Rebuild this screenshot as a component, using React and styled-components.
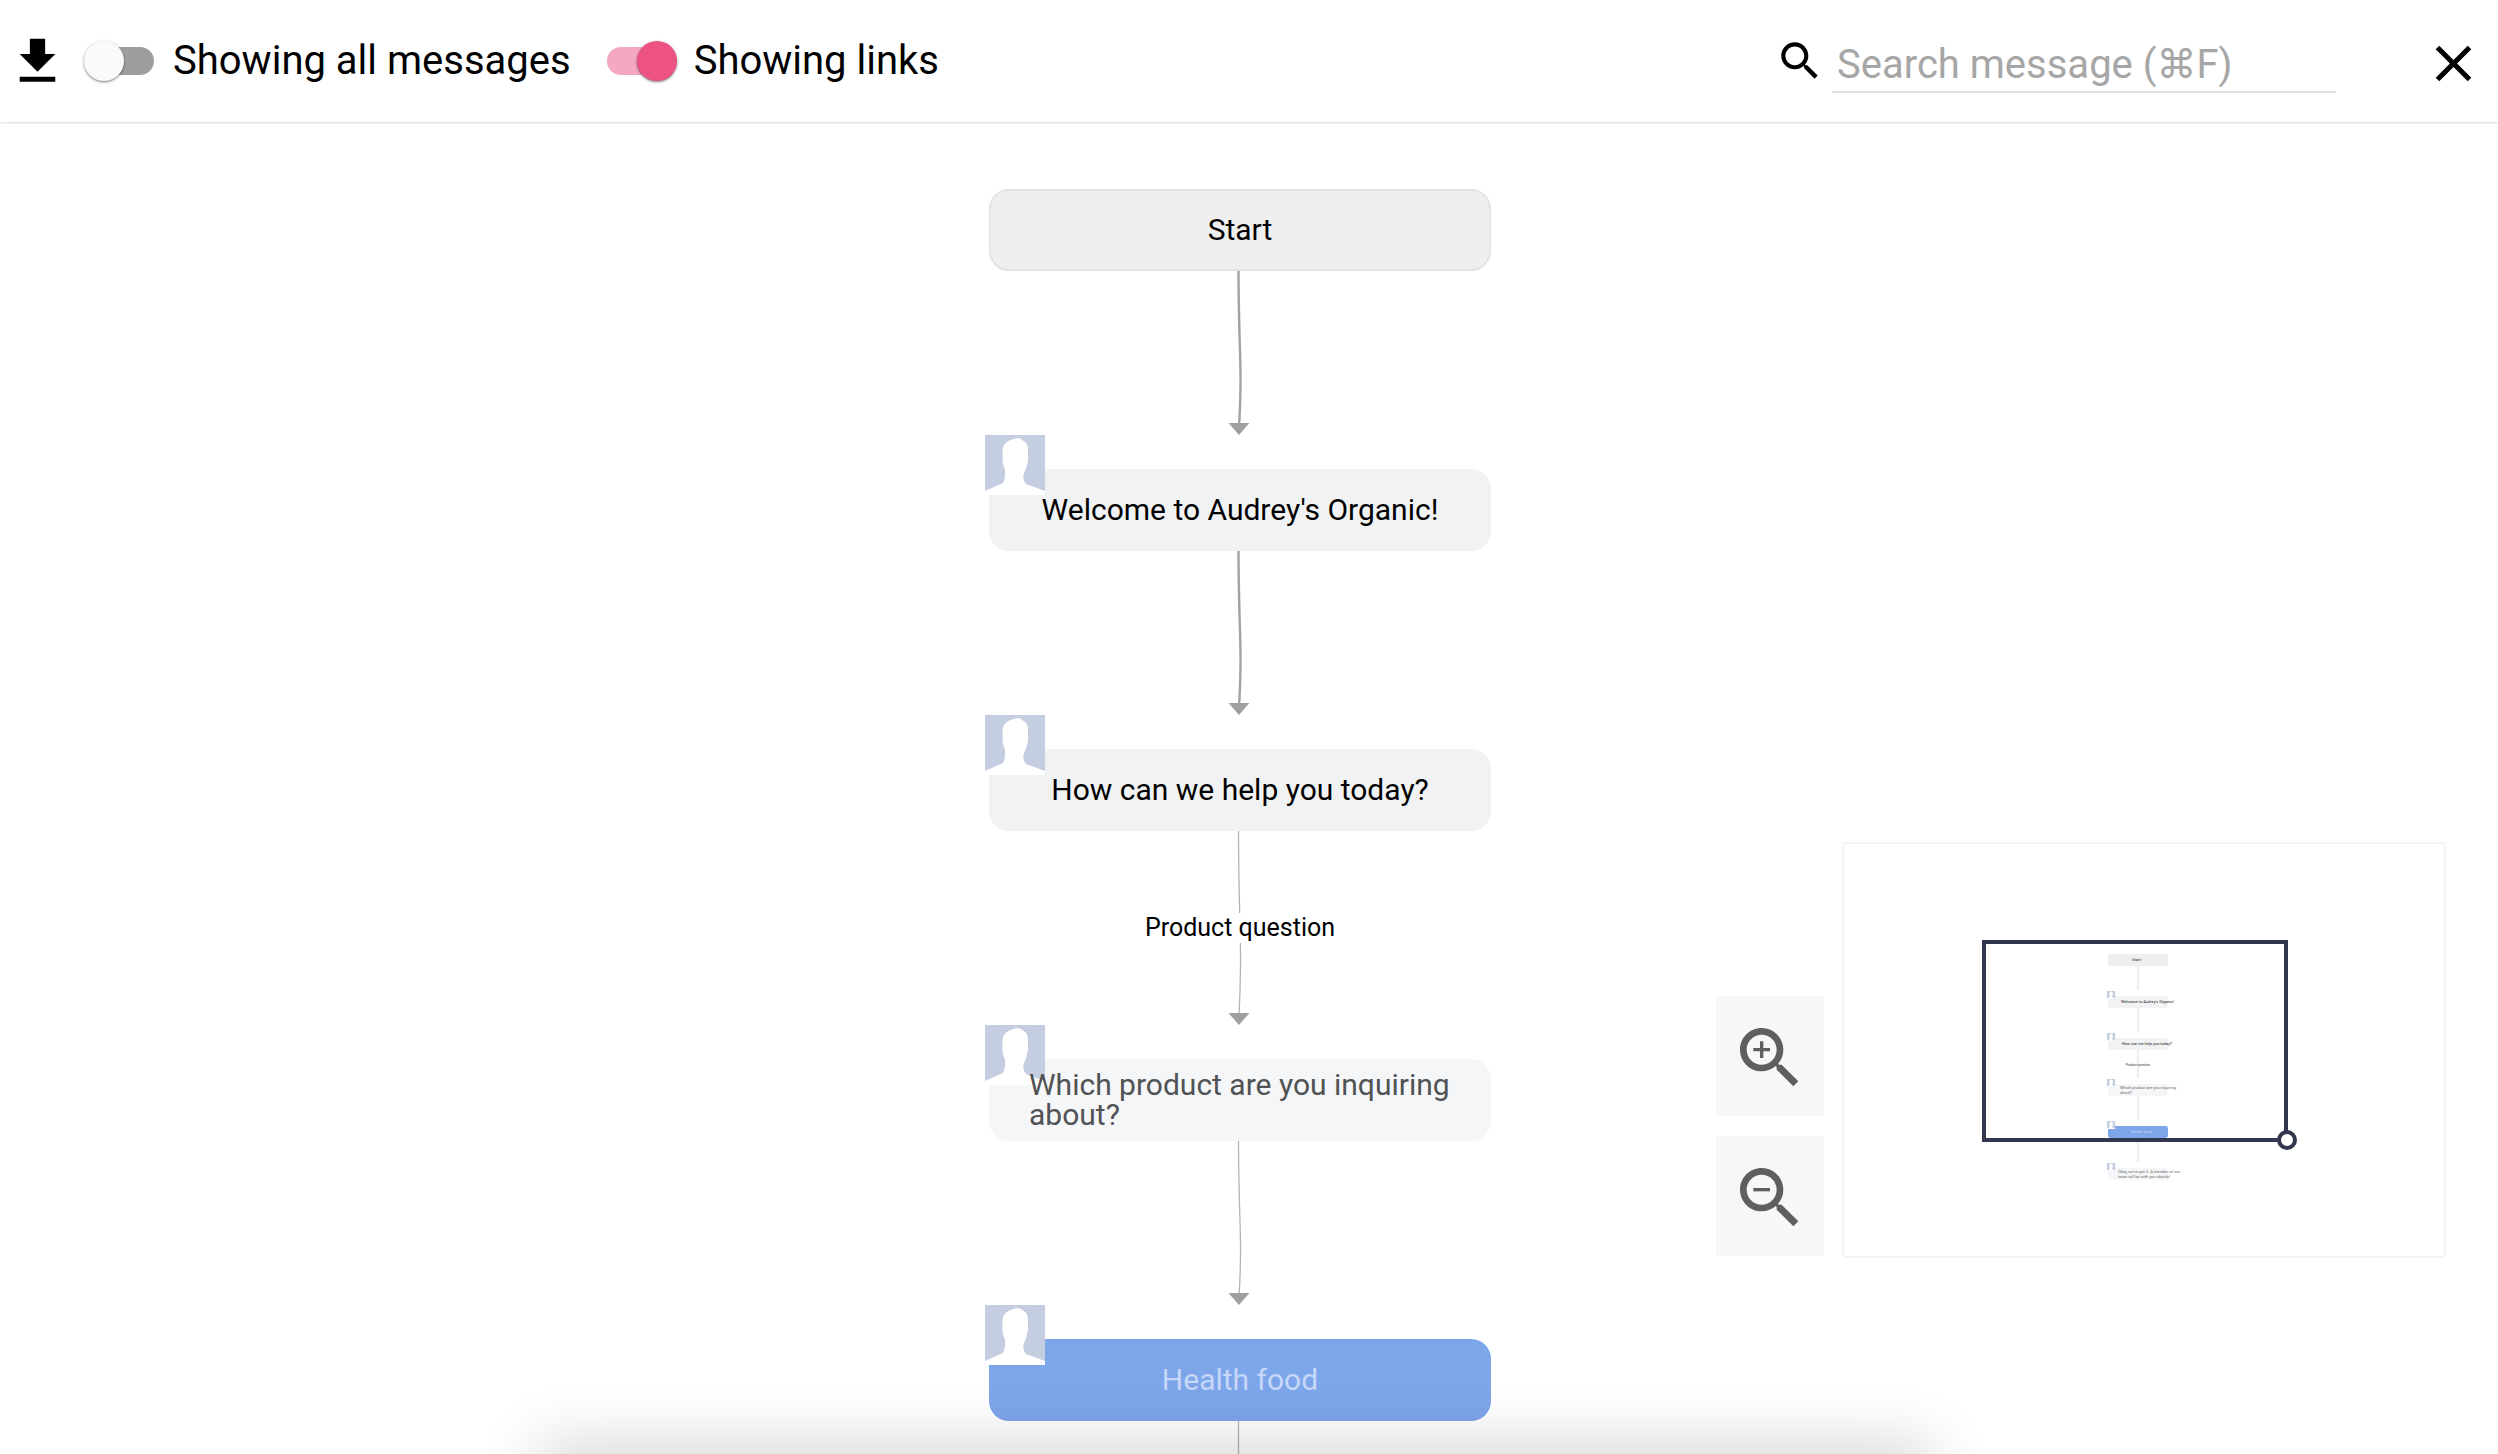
import React from 'react'
import styled, { createGlobalStyle } from 'styled-components'

const GlobalStyle = createGlobalStyle`
    html, body {
        margin: 0;
        padding: 0;
        background: #fff;
        font-family: Roboto, "Liberation Sans", sans-serif;
    }
`

const Page = styled.div`
    position: relative;
    width: 2498px;
    height: 1454px;
    overflow: hidden;
    background: #fff;
`

// top bar
const Toolbar = styled.header`
    position: relative;
    z-index: 3;
    display: flex;
    align-items: center;
    height: 122px;
    padding-left: 7px;
    background: #fff;
    box-shadow: 0 1px 2px rgba(0, 0, 0, 0.14);
`
const ToolIcon = styled.svg`
    display: block;
    flex: none;
    width: ${p => p.$size}px;
    height: ${p => p.$size}px;
    fill: ${p => p.$color || '#000'};
`
const ToggleRow = styled.label`
    display: flex;
    align-items: center;
    gap: 19px;
    margin-left: ${p => p.$gap}px;
`
const ToggleTrack = styled.span`
    position: relative;
    display: block;
    width: 68px;
    height: 28px;
    border-radius: 14px;
    background: ${p => (p.$on ? '#f4a8c1' : '#9e9e9e')};
    margin-left: ${p => (p.$on ? 0 : 2)}px;
    margin-right: ${p => (p.$on ? 0 : 0)}px;
`
const ToggleThumb = styled.span`
    position: absolute;
    top: -6px;
    ${p => (p.$on ? 'right: -2px;' : 'left: -2px;')}
    width: 40px;
    height: 40px;
    border-radius: 50%;
    background: ${p => (p.$on ? '#ec5282' : '#fafafa')};
    box-shadow: 0 1px 3px rgba(0, 0, 0, 0.4), 0 1px 1px rgba(0, 0, 0, 0.16);
`
const ToggleLabel = styled.span`
    font-size: 40px;
    line-height: 48px;
    color: #000;
    white-space: nowrap;
`
const SearchBox = styled.div`
    display: flex;
    align-items: center;
    margin-left: auto;
    gap: 7px;
`
const SearchInput = styled.input`
    width: 504px;
    height: 52px;
    box-sizing: border-box;
    margin-top: 12px;
    padding: 0 0 4px 5px;
    border: 0;
    border-bottom: 2px solid #e0e0e0;
    outline: none;
    background: transparent;
    font-family: Roboto, "DejaVu Sans", sans-serif;
    font-size: 40px;
    color: #000;
    &::placeholder {
        color: #a6a6a6;
        opacity: 1;
    }
`
const CloseButton = styled.div`
    margin-left: 87px;
    margin-right: 14px;
    margin-top: 4px;
`

// flow diagram
const Canvas = styled.main`
    padding: 67px 0 0 989px;
`
const FlowColumn = styled.div`
    display: flex;
    flex-direction: column;
    width: 502px;
`
const NodeBox = styled.div`
    position: relative;
    flex: none;
    display: flex;
    align-items: center;
    justify-content: center;
    box-sizing: border-box;
    height: ${p => (p.$variant === 'start' ? 82 : 82)}px;
    padding: 0 40px;
    border-radius: 20px;
    font-size: 30px;
    line-height: 30px;
    text-align: left;
    color: ${p => ({ blue: '#c6d7f7', dim: '#505254' }[p.$variant] || '#000')};
    background: ${p => ({ start: '#efefef', blue: '#7da5ea', dim: '#f5f6f8' }[p.$variant] || '#f1f2f4')};
    border: ${p => (p.$variant === 'start' ? '2px solid #e3e3e3' : '0')};
`
const NodeText = styled.span`
    position: relative;
    z-index: 1;
`
const Avatar = styled.svg`
    position: absolute;
    left: -4px;
    top: -34px;
    display: block;
    width: 60px;
    height: 60px;
`
const EdgeBox = styled.div`
    position: relative;
    flex: none;
    height: ${p => p.$height}px;
`
const EdgeSvg = styled.svg`
    display: block;
    width: 40px;
    height: 100%;
    margin: 0 auto;
    overflow: visible;
`
const EdgeLabel = styled.span`
    position: absolute;
    left: 0;
    right: 0;
    top: 82px;
    width: max-content;
    margin: 0 auto;
    padding: 0;
    background: #fff;
    font-size: 25px;
    line-height: 30px;
    color: #000;
`

// shadow of the panel below the fold
const BottomShadow = styled.div`
    position: absolute;
    z-index: 2;
    left: 537px;
    width: 1395px;
    top: 1480px;
    height: 60px;
    pointer-events: none;
    box-shadow: 0 -38px 60px rgba(0, 0, 0, 0.16);
`

// minimap and zoom
const Controls = styled.aside`
    position: absolute;
    z-index: 4;
    top: 844px;
    left: 1716px;
    display: flex;
    align-items: flex-end;
    gap: 20px;
`
const ZoomColumn = styled.div`
    display: flex;
    flex-direction: column;
    gap: 20px;
`
const ZoomButton = styled.button`
    display: flex;
    align-items: center;
    justify-content: center;
    width: 108px;
    height: 120px;
    padding: 4px 0 0;
    border: 0;
    background: #f7f7f7;
`
const Minimap = styled.div`
    width: 600px;
    height: 412px;
    background: #fff;
    box-shadow: 0 0 3px rgba(0, 0, 0, 0.16);
`
const MiniSvg = styled.svg`
    display: block;
    width: 100%;
    height: 100%;
    font-family: Roboto, sans-serif;
`

const SEARCH = 'M15.5 14h-.79l-.28-.27C15.41 12.59 16 11.11 16 9.5 16 5.91 13.09 3 9.5 3S3 5.91 3 9.5 5.91 16 9.5 16c1.61 0 3.09-.59 4.23-1.57l.27.28v.79l5 4.99L20.49 19l-4.99-5zm-6 0C7.01 14 5 11.99 5 9.5S7.01 5 9.5 5 14 7.01 14 9.5 11.99 14 9.5 14z'

const Person = () => (
    <>
        <rect width="60" height="60" fill="#c5cde0" />
        <path
            d="M34 3 C25 4 18 8 17.5 15 L17.5 25 C17 27 19 31 20 35 C20.5 41 19.5 46 18 48 L0 56 L0 60 L60 60 L60 56 L41 49 C38.5 46 37.5 42 39 38 C41 34 42 30 43 25 L43 14 C43 9 40 6 37 5 Z"
            fill="#fff"
        />
    </>
)

const Edge = ({ height, thin, label, tail }) => {
    const tip = height - 34
    return (
        <EdgeBox $height={height}>
            <EdgeSvg viewBox={`0 0 40 ${height}`}>
                <path
                    d={tail
                        ? `M18.5 0 L18.5 ${height}`
                        : `M18.5 0 C18.5 ${tip * 0.35} 21 ${tip * 0.55} 20.5 ${tip * 0.7} C20.2 ${tip * 0.85} 19 ${tip * 0.95} 19 ${tip - 8}`}
                    fill="none"
                    stroke={thin ? '#b4b4b4' : '#a2a2a2'}
                    strokeWidth={thin ? 1.3 : 2.4}
                />
                {!tail && <path d={`M8.5 ${tip - 12} L29.5 ${tip - 12} L19 ${tip} Z`} fill="#a0a0a0" />}
            </EdgeSvg>
            {label && <EdgeLabel>{label}</EdgeLabel>}
        </EdgeBox>
    )
}

const Node = ({ variant, avatar = true, children }) => (
    <NodeBox $variant={variant}>
        {avatar && (
            <Avatar viewBox="0 0 60 60">
                <Person />
            </Avatar>
        )}
        <NodeText>{children}</NodeText>
    </NodeBox>
)

const miniNodes = [
    { y: 110, fill: '#efefef' },
    { y: 152, fill: '#f1f2f4', avatar: true },
    { y: 194, fill: '#f1f2f4', avatar: true },
    { y: 240, fill: '#f5f6f8', avatar: true },
    { y: 282, fill: '#7da5ea', avatar: true },
    { y: 324, fill: '#f5f6f8', avatar: true },
]
const miniText = [
    { x: 288, w: 9, y: 117, t: 'Start', c: '#222' },
    { x: 277, w: 53, y: 159, t: "Welcome to Audrey's Organic!", c: '#222' },
    { x: 278, w: 50, y: 201, t: 'How can we help you today?', c: '#222' },
    { x: 282, w: 24, y: 222, t: 'Product question', c: '#333' },
    { x: 276, w: 56, y: 245.4, t: 'Which product are you inquiring', c: '#666' },
    { x: 276, w: 12, y: 249.6, t: 'about?', c: '#666' },
    { x: 287, w: 21, y: 289.4, t: 'Health food', c: '#c6d7f7' },
    { x: 274, w: 62, y: 329.4, t: "Okay, we've got it. A member of our", c: '#666' },
    { x: 274, w: 52, y: 333.6, t: 'team will be with you shortly!', c: '#666' },
]

const MiniMapDrawing = () => (
    <MiniSvg viewBox="0 0 600 412">
        <path d="M294 122 V146 M294 164 V188 M294 206 V234 M294 252 V276 M294 294 V318" stroke="#c4c4c4" strokeWidth="0.6" fill="none" />
        {miniNodes.map(n => (
            <g key={n.y}>
                <rect x="264" y={n.y} width="60" height="12" rx="2.4" fill={n.fill} />
                {n.avatar && (
                    <g transform={`translate(263 ${n.y - 5}) scale(0.135)`}>
                        <Person />
                    </g>
                )}
            </g>
        ))}
        {miniText.map(m => (
            <text key={m.t} x={m.x} y={m.y} fontSize="4" textLength={m.w} lengthAdjust="spacingAndGlyphs" fill={m.c}>
                {m.t}
            </text>
        ))}
        <rect x="140" y="98" width="302" height="198" fill="none" stroke="#32364e" strokeWidth="4" />
        <circle cx="443" cy="296" r="8" fill="#fff" stroke="#32364e" strokeWidth="4" />
    </MiniSvg>
)

const App = () => {
    return (
        <Page>
            <GlobalStyle />
            <Toolbar>
                <ToolIcon $size={61} viewBox="0 0 24 24">
                    <path d="M19 9h-4V3H9v6H5l7 7 7-7zM5 18v2h14v-2H5z" />
                </ToolIcon>
                <ToggleRow $gap={16}>
                    <ToggleTrack>
                        <ToggleThumb />
                    </ToggleTrack>
                    <ToggleLabel>Showing all messages</ToggleLabel>
                </ToggleRow>
                <ToggleRow $gap={36}>
                    <ToggleTrack $on>
                        <ToggleThumb $on />
                    </ToggleTrack>
                    <ToggleLabel>Showing links</ToggleLabel>
                </ToggleRow>
                <SearchBox>
                    <ToolIcon $size={50} viewBox="0 0 24 24">
                        <path d={SEARCH} />
                    </ToolIcon>
                    <SearchInput placeholder="Search message (⌘F)" />
                </SearchBox>
                <CloseButton>
                    <ToolIcon $size={61} viewBox="0 0 24 24">
                        <path d="M19 6.41L17.59 5 12 10.59 6.41 5 5 6.41 10.59 12 5 17.59 6.41 19 12 13.41 17.59 19 19 17.59 13.41 12z" />
                    </ToolIcon>
                </CloseButton>
            </Toolbar>

            <Canvas>
                <FlowColumn>
                    <Node variant="start" avatar={false}>Start</Node>
                    <Edge height={198} />
                    <Node>Welcome to Audrey's Organic!</Node>
                    <Edge height={198} />
                    <Node>How can we help you today?</Node>
                    <Edge height={228} thin label="Product question" />
                    <Node variant="dim">Which product are you inquiring about?</Node>
                    <Edge height={198} thin />
                    <Node variant="blue">Health food</Node>
                    <Edge height={40} thin tail />
                </FlowColumn>
            </Canvas>

            <BottomShadow />

            <Controls>
                <ZoomColumn>
                    <ZoomButton>
                        <ToolIcon $size={80} $color="#5f5f5f" viewBox="0 0 24 24">
                            <path d={SEARCH} />
                            <path d="M12 10h-2v2H9v-2H7V9h2V7h1v2h2v1z" />
                        </ToolIcon>
                    </ZoomButton>
                    <ZoomButton>
                        <ToolIcon $size={80} $color="#5f5f5f" viewBox="0 0 24 24">
                            <path d={SEARCH} />
                            <path d="M7 9h5v1H7z" />
                        </ToolIcon>
                    </ZoomButton>
                </ZoomColumn>
                <Minimap>
                    <MiniMapDrawing />
                </Minimap>
            </Controls>
        </Page>
    )
}

export default App
